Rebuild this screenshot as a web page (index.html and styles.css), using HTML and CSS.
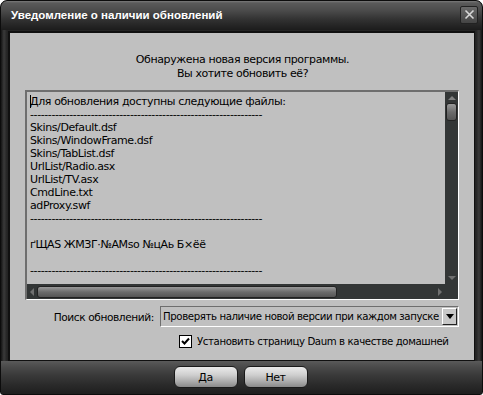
FILE: index.html
```html
<!DOCTYPE html>
<html>
<head>
<meta charset="utf-8">
<link rel="stylesheet" href="styles.css">
</head>
<body>
<div class="window">
  <div class="titlebar">
    <span class="title">Уведомление о наличии обновлений</span>
    <span class="close">
      <svg width="11" height="11" viewBox="0 0 11 11"><path d="M1.5 1.5 L9.5 9.5 M9.5 1.5 L1.5 9.5" stroke="#d8d8d8" stroke-width="1.6"/></svg>
    </span>
  </div>
  <div class="body">
    <div class="msg">
      <div>Обнаружена новая версия программы.</div>
      <div>Вы хотите обновить её?</div>
    </div>
    <div class="listbox">
      <div class="listmain">
        <div class="text">
          <div class="caret-line"><span class="caret"></span>Для обновления доступны следующие файлы:</div>
          <div>-----------------------------------------------------------------</div>
          <div>Skins/Default.dsf</div>
          <div>Skins/WindowFrame.dsf</div>
          <div>Skins/TabList.dsf</div>
          <div>UrlList/Radio.asx</div>
          <div>UrlList/TV.asx</div>
          <div>CmdLine.txt</div>
          <div>adProxy.swf</div>
          <div>-----------------------------------------------------------------</div>
          <div>&nbsp;</div>
          <div>ґЩАS ЖМЗГ·№АМso №цАь Б×ёё</div>
          <div>&nbsp;</div>
          <div>-----------------------------------------------------------------</div>
        </div>
        <div class="hscroll">
          <span class="arrow-l"></span>
          <span class="hthumb"></span>
          <span class="arrow-r"></span>
        </div>
      </div>
      <div class="vscroll">
        <span class="arrow-u"></span>
        <span class="vthumb"></span>
        <span class="vfill"></span>
        <span class="arrow-d"></span>
        <span class="corner"></span>
      </div>
    </div>
    <div class="row search">
      <span class="label">Поиск обновлений:</span>
      <div class="select">
        <span class="sel-text">Проверять наличие новой версии при каждом запуске</span>
        <span class="sel-btn"><span class="tri"></span></span>
      </div>
    </div>
    <div class="row check">
      <span class="cbox">
        <svg width="9" height="9" viewBox="0 0 9 9"><path d="M1 4 L3.5 6.5 L8 1.5" stroke="#000" stroke-width="2" fill="none"/></svg>
      </span>
      <span class="check-label">Установить страницу Daum в качестве домашней</span>
    </div>
  </div>
  <div class="footer">
    <button class="btn">Да</button>
    <button class="btn">Нет</button>
  </div>
</div>
</body>
</html>
```

FILE: styles.css
```css
html, body {
  margin: 0;
  padding: 0;
  background: #ffffff;
}
body {
  font-family: "DejaVu Sans", Tahoma, sans-serif;
  font-size: 11px;
  letter-spacing: -0.4px;
  color: #000;
}
.window {
  width: 483px;
  height: 395px;
  box-sizing: border-box;
  background: linear-gradient(90deg, #151515 0px, #3a3a3a 3px, #242424 6px, #242424 calc(100% - 6px), #3a3a3a calc(100% - 3px), #151515 100%);
  border-radius: 7px 7px 3px 3px;
  border: 1px solid #0c0c0c;
  display: flex;
  flex-direction: column;
  overflow: hidden;
}
.titlebar {
  height: 29px;
  flex: none;
  display: flex;
  align-items: center;
  justify-content: space-between;
  padding: 0 4px 0 10px;
  background: linear-gradient(180deg, #7a7a7a 0px, #5a5a5a 2px, #4a4a4a 10px, #333 18px, #262626 24px, #1c1c1c 29px);
  border-radius: 6px 6px 0 0;
}
.title {
  color: #fff;
  font-weight: bold;
  font-size: 11.5px;
  font-family: "Liberation Sans", Arial, sans-serif;
  letter-spacing: 0;
  margin-top: -1px;
}
.close {
  width: 16px;
  height: 16px;
  border: 1px solid #222;
  border-radius: 2px;
  background: linear-gradient(180deg, #6a6a6a, #444);
  display: flex;
  align-items: center;
  justify-content: center;
  margin-top: -2px;
}
.body {
  flex: none;
  height: 330px;
  margin: 1px 7px 0 7px;
  background: #c0c0c0;
  border-top: 2px solid #101010;
  border-left: 2px solid #101010;
  border-right: 1px solid #101010;
  border-bottom: 1px solid #101010;
  box-sizing: border-box;
  display: flex;
  flex-direction: column;
  padding: 20px 14px 0 15px;
}
.msg {
  text-align: center;
  line-height: 14px;
  padding-left: 0;
}
.listbox {
  margin-top: 9px;
  height: 210px;
  box-sizing: border-box;
  border-top: 2px solid #6e6e6e;
  border-left: 2px solid #6e6e6e;
  border-right: 1px solid #fff;
  border-bottom: 1px solid #fff;
  display: flex;
  margin-right: 1px;
}
.listmain {
  flex: 1;
  display: flex;
  flex-direction: column;
  min-width: 0;
}
.text {
  flex: 1;
  padding: 3px 0 0 3px;
  line-height: 13px;
  white-space: nowrap;
  overflow: hidden;
  font-size: 11px;
}
.caret-line { position: relative; }
.caret {
  position: absolute;
  left: 0;
  top: 0;
  width: 1px;
  height: 13px;
  background: #000;
}
.hscroll {
  height: 15px;
  background: #333636;
  display: flex;
  align-items: center;
  flex: none;
}
.arrow-l {
  width: 0; height: 0;
  border-top: 4px solid transparent;
  border-bottom: 4px solid transparent;
  border-right: 4px solid #707070;
  margin: 0 3px 0 3px;
}
.hthumb {
  width: 300px;
  height: 12px;
  border-radius: 3px;
  background: linear-gradient(180deg, #9a9a9a, #6c6c6c 50%, #555 100%);
  border: 1px solid #222;
  box-sizing: border-box;
}
.arrow-r {
  margin-left: auto;
  width: 0; height: 0;
  border-top: 4px solid transparent;
  border-bottom: 4px solid transparent;
  border-left: 4px solid #707070;
  margin-right: 3px;
}
.vscroll {
  width: 13px;
  background: #333636;
  display: flex;
  flex-direction: column;
  align-items: center;
  flex: none;
}
.arrow-u {
  margin-top: 4px;
  width: 0; height: 0;
  border-left: 4px solid transparent;
  border-right: 4px solid transparent;
  border-bottom: 4px solid #808080;
}
.vthumb {
  margin-top: 3px;
  width: 11px;
  height: 18px;
  border-radius: 3px;
  background: linear-gradient(180deg, #9a9a9a, #6c6c6c 50%, #555 100%);
  border: 1px solid #222;
  box-sizing: border-box;
}
.vfill { flex: 1; }
.arrow-d {
  width: 0; height: 0;
  border-left: 4px solid transparent;
  border-right: 4px solid transparent;
  border-top: 4px solid #707070;
  margin-bottom: 4px;
}
.corner {
  height: 15px;
  width: 13px;
}
.row {
  display: flex;
  align-items: center;
}
.search {
  margin-top: 6px;
  justify-content: flex-end;
  margin-right: 1px;
}
.label {
  margin-right: 6px;
  font-size: 10.6px;
}
.select {
  width: 299px;
  height: 21px;
  flex: none;
  box-sizing: border-box;
  border-top: 1px solid #6e6e6e;
  border-left: 1px solid #6e6e6e;
  border-right: 1px solid #fff;
  border-bottom: 1px solid #fff;
  display: flex;
  align-items: center;
  justify-content: space-between;
  padding-left: 2px;
}
.sel-text {
  white-space: nowrap;
  overflow: hidden;
  font-size: 10.2px;
}
.sel-btn {
  width: 15px;
  height: 17px;
  flex: none;
  box-sizing: border-box;
  background: #c8c8c8;
  border: 1px solid #fff;
  border-right-color: #222;
  border-bottom-color: #222;
  display: flex;
  align-items: center;
  justify-content: center;
  margin-right: 1px;
}
.tri {
  width: 0; height: 0;
  border-left: 4px solid transparent;
  border-right: 4px solid transparent;
  border-top: 5px solid #000;
}
.check {
  margin-top: 8px;
  padding-left: 154px;
}
.check-label {
  white-space: nowrap;
  font-size: 10.2px;
}
.cbox {
  width: 13px;
  height: 13px;
  flex: none;
  box-sizing: border-box;
  background: #fff;
  border: 1px solid #000;
  display: flex;
  align-items: center;
  justify-content: center;
  margin-right: 5px;
}
.footer {
  flex: 1;
  background: linear-gradient(180deg, #5a5a5a 0px, #4a4a4a 6px, #3a3a3a 14px, #2a2a2a 24px, #1e1e1e 100%);
  display: flex;
  justify-content: center;
  align-items: flex-start;
  gap: 6px;
  padding-top: 5px;
  padding-right: 2px;
}
.btn {
  width: 64px;
  height: 22px;
  border: 1px solid #1a1a1a;
  border-radius: 6px;
  background: linear-gradient(180deg, #eaeaea 0%, #cfcfcf 40%, #a8a8a8 75%, #8a8a8a 100%);
  font-family: "DejaVu Sans", Tahoma, sans-serif;
  font-size: 11px;
  letter-spacing: -0.4px;
  color: #000;
  padding: 0;
}
```
